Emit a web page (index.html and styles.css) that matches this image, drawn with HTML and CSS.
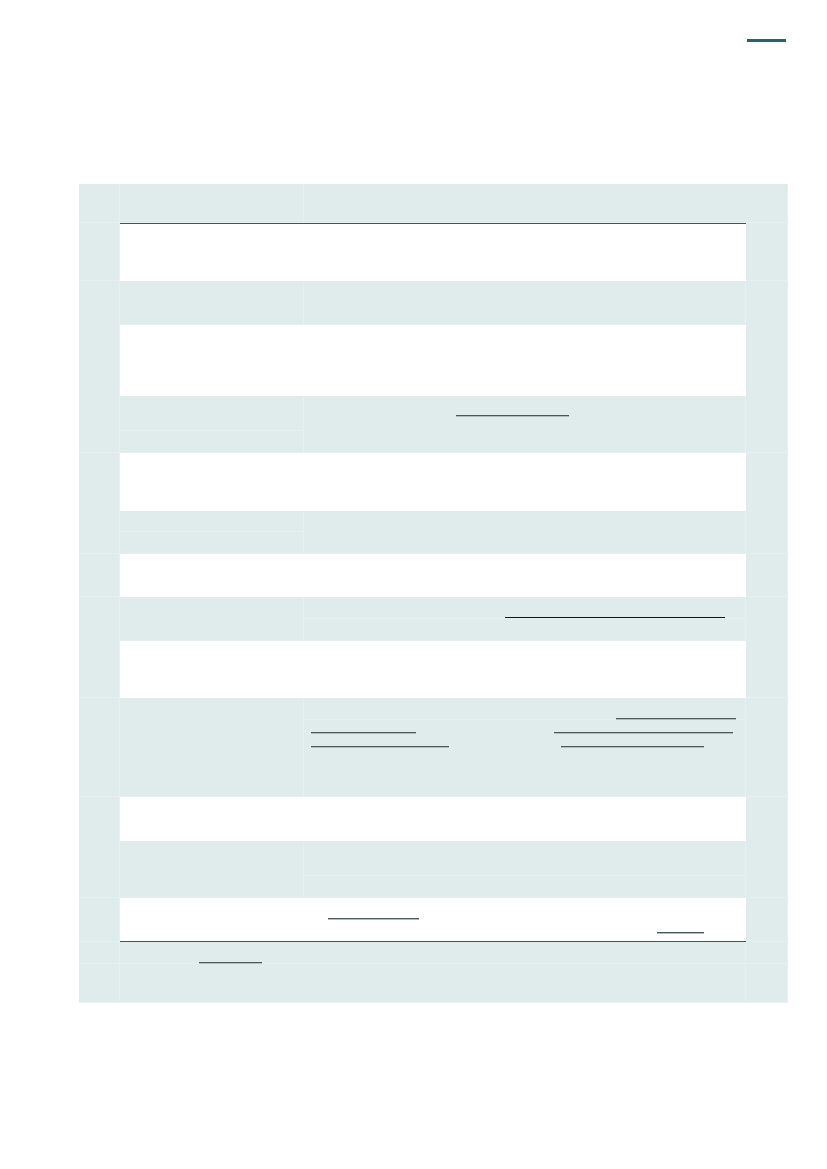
FILE: index.html
```html
<!DOCTYPE html>
<html lang="en">
<head>
<meta charset="utf-8">
<title>Table</title>
<link rel="stylesheet" href="styles.css">
</head>
<body>
<div class="page">
  <div class="topbar"><span class="mark"></span></div>
  <div class="sheet">
    <!-- header -->
    <div class="m"></div><div class="lt"></div><div class="lt wide"></div>
    <!-- row 1 -->
    <div class="m"></div><div class="wh top-rule"></div><div class="wh top-rule"></div><div class="m"></div>
    <!-- rows 2-4 -->
    <div class="m s4"></div><div class="lt"></div><div class="lt"></div><div class="m s4"></div>
    <div class="wh"></div><div class="wh"></div>
    <div class="lt"></div>
    <div class="lt s2"><div class="ul ul-a"></div></div>
    <div class="lt"></div>
    <!-- rows 5-6 -->
    <div class="m s3"></div><div class="wh"></div><div class="wh"></div><div class="m s3"></div>
    <div class="lt"></div><div class="lt s2"></div>
    <div class="lt"></div>
    <!-- row 7 -->
    <div class="m"></div><div class="wh"></div><div class="wh"></div><div class="m"></div>
    <!-- rows 8-9 -->
    <div class="m s3"></div><div class="lt s2"></div>
    <div class="lt"><div class="ul ul-b"></div></div>
    <div class="m s3"></div>
    <div class="lt"></div>
    <div class="wh"></div><div class="wh"></div>
    <!-- row 10 -->
    <div class="m s2"></div><div class="lt s2"></div>
    <div class="lt"><div class="ul ul-c"></div></div>
    <div class="m s2"></div>
    <div class="lt">
      <div class="ul-row row-d1"><div class="ul ul-d1"></div><div class="ul ul-d2"></div></div>
      <div class="ul-row row-d2"><div class="ul ul-d3"></div><div class="ul ul-d4"></div></div>
    </div>
    <!-- rows 11-12 -->
    <div class="m s3"></div><div class="wh"></div><div class="wh"></div><div class="m s3"></div>
    <div class="lt s2"></div><div class="lt"></div>
    <div class="lt"></div>
    <!-- row 13 -->
    <div class="m"></div><div class="wh bottom-rule"></div>
    <div class="wh bottom-rule"><div class="ul ul-e1"></div><div class="ul ul-e2"></div></div>
    <div class="m"></div>
    <!-- row 14 -->
    <div class="m"></div><div class="lt wide"><div class="ul ul-f"></div></div><div class="m"></div>
    <!-- row 15 -->
    <div class="m"></div><div class="lt wide"></div><div class="m"></div>
  </div>
</div>
</body>
</html>
```
FILE: styles.css
```css
* { box-sizing: border-box; }
html, body { margin: 0; padding: 0; background: #ffffff; }
body { font-family: "Liberation Sans", Arial, sans-serif; }

.page { width: 827px; min-height: 1169px; padding-top: 39px; }

.topbar { display: flex; justify-content: flex-end; padding-right: 41px; height: 3px; }
.mark { display: block; width: 39px; height: 3px; background: #24666d; }

.sheet {
  display: grid;
  grid-template-columns: 41px 184px 442px 42px;
  grid-template-rows: 39px 58px 44px 71px 35px 22px 58px 21px 22px 43px 22px 22px 57px 22px 77px 44px 35px 22px 44px 22px 39px;
  width: 709px;
  margin: 142px 0 0 79px;
}

.m, .lt {
  background: #e0ecec;
  border-right: 1px solid #e7f0f0;
  border-bottom: 1px solid #e7f0f0;
}
.wh { background: #ffffff; }
.s2 { grid-row: span 2; }
.s3 { grid-row: span 3; }
.s4 { grid-row: span 4; }
.wide { grid-column: span 2; }

.top-rule { border-top: 1px solid #4b5256; }
.bottom-rule { border-bottom: 1px solid #4b5256; box-shadow: 0 1px 0 #b9c2c2; }

.ul {
  height: 2px;
  border-top: 1px solid #50575b;
  border-bottom: 1px solid #b3bcbc;
}
.ul-row { display: flex; }

.ul-a { width: 113px; margin: 19px 0 0 152px; }
.ul-b { width: 220px; margin: 20px 0 0 201px; border-top-color: #111; border-bottom-color: transparent; }
.ul-c { width: 120px; margin: 20px 0 0 312px; }
.row-d1 { margin-top: 12px; }
.row-d2 { margin-top: 12px; }
.ul-d1 { width: 105px; margin-left: 7px; }
.ul-d2 { width: 179px; margin-left: 138px; }
.ul-d3 { width: 138px; margin-left: 7px; }
.ul-d4 { width: 143px; margin-left: 112px; }
.ul-e1 { width: 91px; margin: 20px 0 0 24px; }
.ul-e2 { width: 47px; margin: 12px 0 0 353px; }
.ul-f { width: 63px; margin: 20px 0 0 79px; }
```
